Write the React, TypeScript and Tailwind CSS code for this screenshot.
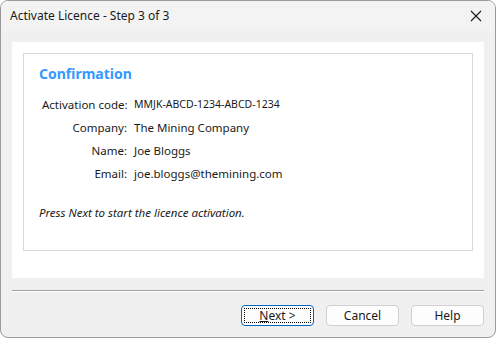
import React from "react";

const font = { fontFamily: '"Segoe UI", "Noto Sans", "Open Sans", sans-serif' };

function Row({ label, value, small }: { label: string; value: string; small?: boolean }) {
  return (
    <div className="flex h-[23px] items-center whitespace-nowrap">
      <div className="w-[85px] text-right text-[11.5px] text-[#1a1a1a]">{label}</div>
      <div className={"ml-[7px] text-[#1a1a1a] " + (small ? "text-[10.5px]" : "text-[11.5px]")}>{value}</div>
    </div>
  );
}

function Btn({ children, focused }: { children: React.ReactNode; focused?: boolean }) {
  return (
    <div
      className={
        "relative flex h-[21px] w-[73px] items-center justify-center rounded-[4px] border bg-[#fdfdfd] text-[12px] text-[#1a1a1a] " +
        (focused ? "border-[#0067c0]" : "border-[#d0d0d0]")
      }
    >
      {focused && (
        <div className="absolute inset-[2px] border border-dotted border-black" />
      )}
      {children}
    </div>
  );
}

export default function App() {
  return (
    <div className="h-[338px] w-[496px] bg-white" style={font}>
      <div className="flex h-[338px] w-[496px] flex-col overflow-hidden rounded-[8px] border border-[#9a9a9a] bg-[#f0f0f0]">
        <div className="flex h-[30px] shrink-0 items-center justify-between bg-[#f3f3f3] pl-[9px] pr-[10px]">
          <span className="text-[12px] text-[#1a1a1a]">Activate Licence - Step 3 of 3</span>
          <svg width="12" height="12" viewBox="0 0 12 12" className="mr-[3px]">
            <path d="M1 1 L11 11 M11 1 L1 11" stroke="#1a1a1a" strokeWidth="1.1" />
          </svg>
        </div>
        <div className="flex flex-1 flex-col px-[11px] pt-[11px]">
          <div className="h-[236px] bg-white p-[11px]">
            <div className="h-[198px] border border-[#d9d9d9] pl-[15px] pt-[9px]">
              <div className="text-[14px] font-bold text-[#3399ff]">Confirmation</div>
              <div className="mt-[9px] pl-[3px]">
                <Row label="Activation code:" value="MMJK-ABCD-1234-ABCD-1234" small />
                <Row label="Company:" value="The Mining Company" />
                <Row label="Name:" value="Joe Bloggs" />
                <Row label="Email:" value="joe.bloggs@themining.com" />
              </div>
              <div className="mt-[19px] text-[11.5px] italic text-[#1a1a1a]">
                Press Next to start the licence activation.
              </div>
            </div>
          </div>
          <div className="mt-[12px] h-[1px] bg-[#a0a0a0]" />
          <div className="h-[1px] bg-white" />
          <div className="mt-[13px] flex justify-end gap-[12px] pr-[0px]">
            <Btn focused>
              <span>
                <span className="underline">N</span>ext &gt;
              </span>
            </Btn>
            <Btn>Cancel</Btn>
            <Btn>Help</Btn>
          </div>
        </div>
      </div>
    </div>
  );
}
